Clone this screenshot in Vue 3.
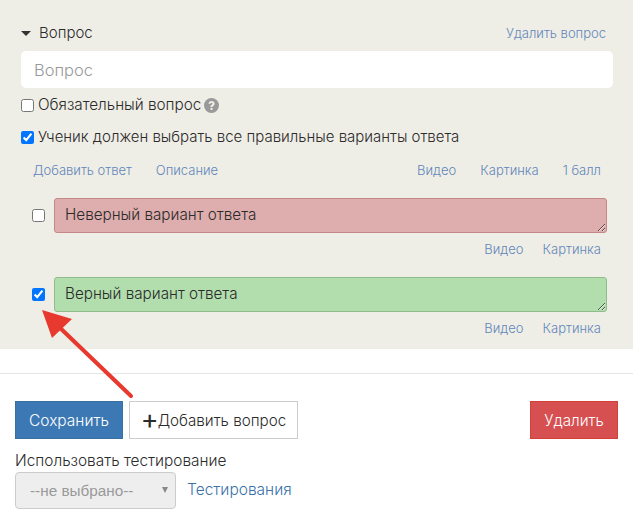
<template>
  <div class="page">
    <section class="panel">
      <div class="head-row">
        <div class="head-title">
          <span class="caret"></span>
          <span>Вопрос</span>
        </div>
        <a class="link head-del">Удалить вопрос</a>
      </div>
      <input class="question" type="text" placeholder="Вопрос" />
      <label class="check-line first">
        <input type="checkbox" />
        <span>Обязательный вопрос</span>
        <svg class="help" viewBox="0 0 16 16" width="15" height="15">
          <circle cx="8" cy="8" r="8" fill="#999" />
          <path d="M4.800 6.200C4.900 4.300 6.300 3.300 8.100 3.300c1.900 0 3.200 1.100 3.200 2.700 0 2.200-2.200 2.100-2.200 3.700H6.900c0-2.600 2.100-2.500 2.100-3.600 0-.6-.4-1-1-1-.7 0-1 .5-1.100 1.100z" fill="#efeee6" />
          <rect x="6.900" y="10.500" width="2.200" height="2.200" fill="#efeee6" />
        </svg>
      </label>
      <label class="check-line second">
        <input type="checkbox" checked />
        <span>Ученик должен выбрать все правильные варианты ответа</span>
      </label>
      <div class="tools">
        <div class="tools-left">
          <a class="link">Добавить ответ</a>
          <a class="link">Описание</a>
        </div>
        <div class="tools-right">
          <a class="link">Видео</a>
          <a class="link">Картинка</a>
          <a class="link">1 балл</a>
        </div>
      </div>
      <div v-for="a in answers" :key="a.text" class="answer">
        <div class="answer-row">
          <input type="checkbox" :checked="a.right" />
          <textarea :class="a.right ? 'right' : 'wrong'" :value="a.text"></textarea>
        </div>
        <div class="answer-links">
          <a class="link">Видео</a>
          <a class="link">Картинка</a>
        </div>
      </div>
    </section>

    <div class="footer">
      <div class="buttons">
        <button class="btn save">Сохранить</button>
        <button class="btn add"><span class="plus">+</span>Добавить вопрос</button>
        <button class="btn remove">Удалить</button>
      </div>
      <div class="test-label">Использовать тестирование</div>
      <div class="test-row">
        <div class="select-wrap">
          <select disabled>
            <option>--не выбрано--</option>
          </select>
        </div>
        <a class="test-link">Тестирования</a>
      </div>
    </div>

    <svg class="arrow" width="100" height="95" viewBox="0 0 100 95">
      <path d="M90 87 L15 15" stroke="#e8392f" stroke-width="4" stroke-linecap="round" />
      <polygon points="1,1 31,10 11,29" fill="#e8392f" />
    </svg>
  </div>
</template>

<script setup>
const answers = [
  { text: 'Неверный вариант ответа', right: false },
  { text: 'Верный вариант ответа', right: true }
]
</script>

<style>
html, body {
  margin: 0;
  background: #fff;
}
</style>

<style scoped>
.page {
  position: relative;
  width: 633px;
  height: 523px;
  overflow: hidden;
  font-family: Inter, "Noto Sans", sans-serif;
  font-size: 15px;
  font-weight: 300;
  color: #2b2b2b;
}

.panel {
  height: 349px;
  box-sizing: border-box;
  padding: 24px 20px 0 21px;
  background: #efeee6;
}

.link {
  color: #5f86bb;
  font-size: 13px;
  font-weight: 300;
}

.head-row {
  display: flex;
  justify-content: space-between;
  height: 27px;
  padding-right: 7px;
}

.head-title {
  display: flex;
  align-items: flex-start;
  line-height: 18px;
}

.caret {
  width: 0;
  height: 0;
  margin: 7px 8px 0 0;
  border-left: 5px solid transparent;
  border-right: 5px solid transparent;
  border-top: 5px solid #333;
}

.head-del {
  line-height: 16px;
  margin-top: 1px;
}

.question {
  display: block;
  width: 100%;
  height: 37px;
  box-sizing: border-box;
  padding: 0 13px;
  border: 0;
  border-radius: 5px;
  background: #fff;
  font-family: inherit;
  font-size: 16.500px;
  font-weight: 300;
}

.question::placeholder {
  color: #999;
}

.check-line {
  display: flex;
  align-items: center;
  gap: 4px;
  line-height: 18px;
}

.check-line input {
  width: 13px;
  height: 13px;
  margin: 0;
}

.check-line.first {
  margin-top: 8px;
  font-size: 15.300px;
}

.check-line.second {
  margin-top: 14px;
}

.help {
  margin-left: -1px;
}

.tools {
  display: flex;
  justify-content: space-between;
  margin-top: 16px;
  padding: 0 12px;
  line-height: 16px;
}

.tools-left {
  display: flex;
  gap: 24px;
}

.tools-right {
  display: flex;
  gap: 24px;
}

.answer {
  margin-top: 20px;
  height: 61px;
}

.answer + .answer {
  margin-top: 18px;
}

.answer-row {
  display: flex;
  align-items: center;
  padding-left: 11px;
}

.answer-row input {
  width: 13px;
  height: 13px;
  margin: 0 9px 0 0;
}

.answer-row textarea {
  display: block;
  width: 553px;
  height: 35px;
  box-sizing: border-box;
  padding: 7px 10px;
  border-radius: 3px;
  outline: 0;
  font-family: inherit;
  font-size: 15.250px;
  font-weight: 300;
  line-height: 18px;
  color: #2b2b2b;
  overflow: hidden;
}

.wrong {
  background: #deadad;
  border: 1px solid #c48888;
}

.right {
  background: #b2deae;
  border: 1px solid #8fbc8b;
}

.answer-links {
  display: flex;
  justify-content: flex-end;
  gap: 19px;
  margin-top: 8px;
  padding-right: 12px;
  line-height: 16px;
}

.footer {
  margin-top: 24px;
  padding: 27px 15px 0;
  border-top: 1px solid #e5e5e5;
}

.buttons {
  display: flex;
  gap: 6px;
}

.btn {
  height: 38px;
  box-sizing: border-box;
  border: 1px solid;
  border-radius: 0;
  font-family: inherit;
  font-size: 15.200px;
  font-weight: 300;
  padding: 0;
}

.save {
  width: 108px;
  background: #3c78b4;
  border-color: #38719f;
  color: #fff;
  font-size: 15.500px;
}

.add {
  width: 169px;
  background: #fff;
  border-color: #ccc;
  color: #2b2b2b;
}

.plus {
  font-size: 27px;
  font-weight: 400;
  line-height: 14px;
  vertical-align: -3px;
  margin-right: -1px;
}

.remove {
  width: 88px;
  margin-left: auto;
  background: #d64f51;
  border-color: #d43f3a;
  color: #fff;
}

.test-label {
  margin-top: 13px;
  line-height: 18px;
  font-size: 15.400px;
}

.test-row {
  display: flex;
  align-items: center;
  gap: 11px;
  margin-top: 2px;
}

.select-wrap {
  position: relative;
  width: 161px;
}

.select-wrap::after {
  content: "";
  position: absolute;
  right: 8px;
  top: 15px;
  border-left: 3.500px solid transparent;
  border-right: 3.500px solid transparent;
  border-top: 6px solid #888;
}

.test-row select {
  display: block;
  width: 100%;
  height: 37px;
  box-sizing: border-box;
  padding: 0 14px;
  border: 1px solid #ccc;
  border-radius: 4px;
  background: #eee;
  appearance: none;
  font-family: "Liberation Sans", sans-serif;
  font-size: 15.300px;
  color: #999;
  opacity: 1;
}

.test-link {
  color: #3a72a8;
  font-size: 15.500px;
  font-weight: 300;
  margin-bottom: 2px;
}

.arrow {
  position: absolute;
  left: 41px;
  top: 309px;
}
</style>
